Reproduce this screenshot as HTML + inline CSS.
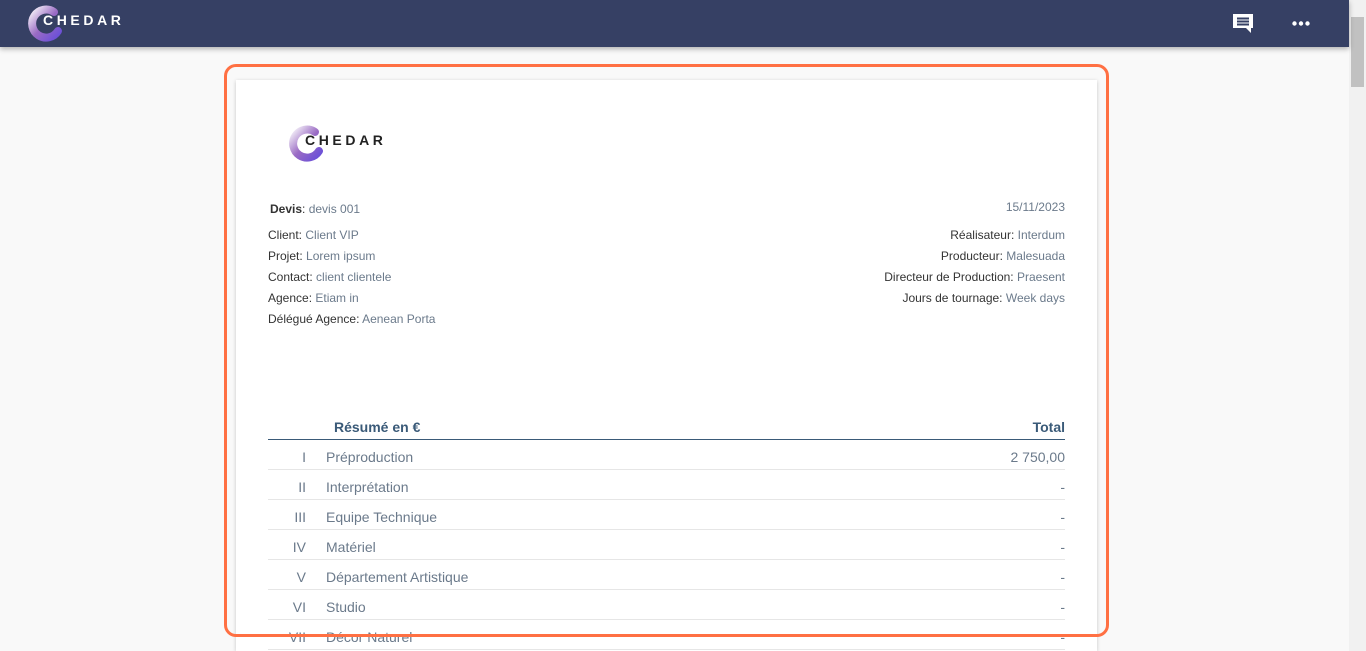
<!DOCTYPE html>
<html><head><meta charset="utf-8"><style>
*{margin:0;padding:0;box-sizing:border-box}
html,body{width:1366px;height:651px;overflow:hidden}
body{background:#f9f9f9;font-family:"Liberation Sans",Arial,sans-serif;position:relative}
.nav{position:absolute;left:0;top:0;width:1349px;height:47px;background:#364064;box-shadow:0 2px 5px rgba(0,0,0,.3);z-index:3}
.sb{position:absolute;right:0;top:0;width:17px;height:651px;background:#f1f1f1}
.sb .th{position:absolute;left:2px;top:17px;width:13px;height:70px;background:#c1c1c1}
.frame{position:absolute;left:224px;top:64px;width:885px;height:573px;border:3px solid #ff7043;border-radius:12px;z-index:2}
.paper{position:absolute;left:236px;top:80px;width:861px;height:571px;background:#fff;box-shadow:0 1px 4px rgba(0,0,0,.2)}
.t{position:absolute;font-size:12px;color:#333;white-space:nowrap}
.t span{color:#6b7a8b}
.r{text-align:right}
.row{position:absolute;left:268px;width:797px;height:30px;border-bottom:1px solid #e6e6e6;font-size:14px;color:#6b7a8b}
.row .n{position:absolute;right:759px;top:9px}
.row .l{position:absolute;left:58px;top:9px}
.row .v{position:absolute;right:0;top:9px}
</style></head><body>
<div class="nav">
 <svg style="position:absolute;left:25px;top:3px" width="40" height="40" viewBox="0 0 40 40"><defs><linearGradient id="g" x1="0" y1="0" x2="1" y2="1"><stop offset="0" stop-color="#f4f0f8"/><stop offset=".5" stop-color="#9a6bc4"/><stop offset="1" stop-color="#6a4fd8"/></linearGradient></defs><path d="M29 9 A14 14 0 1 0 33 28" fill="none" stroke="url(#g)" stroke-width="8" stroke-linecap="round"/></svg>
 <div style="position:absolute;left:43px;top:12px;color:#fff;font-size:14px;letter-spacing:3.6px;font-weight:bold">CHEDAR</div>
 <svg style="position:absolute;left:1233px;top:14px" width="20" height="20" viewBox="0 0 20 20"><path d="M0 0H20V14H18V19L13 14H0Z" fill="#fff"/><rect x="4" y="3.5" width="12" height="2" fill="#364064"/><rect x="4" y="6.5" width="12" height="2" fill="#364064"/><rect x="4" y="9.5" width="12" height="2" fill="#364064"/></svg>
 <svg style="position:absolute;left:1292px;top:21px" width="18" height="5"><circle cx="2.5" cy="2.5" r="2.2" fill="#fff"/><circle cx="9" cy="2.5" r="2.2" fill="#fff"/><circle cx="15.5" cy="2.5" r="2.2" fill="#fff"/></svg>
</div>
<div class="sb"><div class="th"></div></div>
<div class="frame"></div>
<div class="paper"></div>
<svg style="position:absolute;left:286px;top:122px" width="40" height="42" viewBox="0 0 40 40"><path d="M29 9 A14 14 0 1 0 33 28" fill="none" stroke="url(#g)" stroke-width="8" stroke-linecap="round"/></svg>
<div style="position:absolute;left:305px;top:132px;color:#222;font-size:14px;letter-spacing:3.6px;font-weight:bold">CHEDAR</div>
<div class="t" style="left:270px;top:202px"><b>Devis</b>: <span>devis 001</span></div>
<div class="t" style="left:268px;top:228px">Client: <span>Client VIP</span></div>
<div class="t" style="left:268px;top:249px">Projet: <span>Lorem ipsum</span></div>
<div class="t" style="left:268px;top:270px">Contact: <span>client clientele</span></div>
<div class="t" style="left:268px;top:291px">Agence: <span>Etiam in</span></div>
<div class="t" style="left:268px;top:312px">Délégué Agence: <span>Aenean Porta</span></div>
<div class="t r" style="right:301px;top:200px"><span>15/11/2023</span></div>
<div class="t r" style="right:301px;top:228px">Réalisateur: <span>Interdum</span></div>
<div class="t r" style="right:301px;top:249px">Producteur: <span>Malesuada</span></div>
<div class="t r" style="right:301px;top:270px">Directeur de Production: <span>Praesent</span></div>
<div class="t r" style="right:301px;top:291px">Jours de tournage: <span>Week days</span></div>
<div style="position:absolute;left:268px;top:418px;width:797px;height:22px;border-bottom:1px solid #3a5a78;font-size:14px;font-weight:bold;color:#3a5a78">
 <div style="position:absolute;left:66px;top:1px">Résumé en €</div><div style="position:absolute;right:0;top:1px">Total</div></div>
<div class="row" style="top:440px"><div class="n">I</div><div class="l">Préproduction</div><div class="v">2 750,00</div></div>
<div class="row" style="top:470px"><div class="n">II</div><div class="l">Interprétation</div><div class="v">-</div></div>
<div class="row" style="top:500px"><div class="n">III</div><div class="l">Equipe Technique</div><div class="v">-</div></div>
<div class="row" style="top:530px"><div class="n">IV</div><div class="l">Matériel</div><div class="v">-</div></div>
<div class="row" style="top:560px"><div class="n">V</div><div class="l">Département Artistique</div><div class="v">-</div></div>
<div class="row" style="top:590px"><div class="n">VI</div><div class="l">Studio</div><div class="v">-</div></div>
<div class="row" style="top:620px"><div class="n">VII</div><div class="l">Décor Naturel</div><div class="v">-</div></div>
</body></html>
